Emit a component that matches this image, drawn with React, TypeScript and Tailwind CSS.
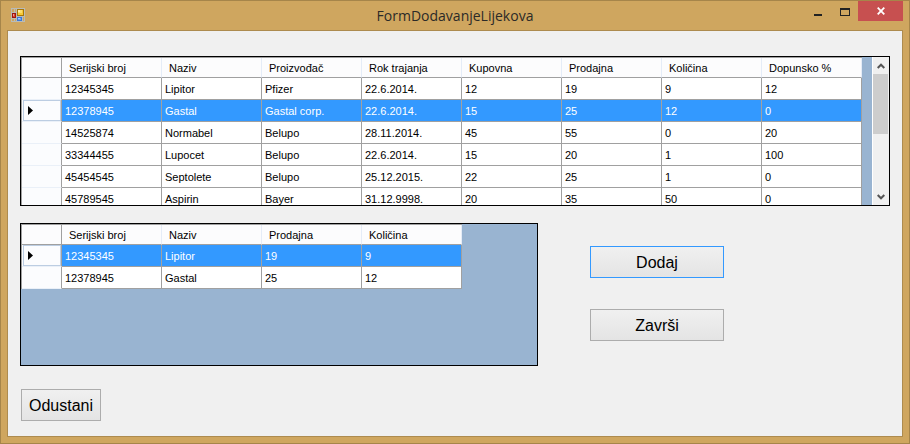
import type { ReactNode } from "react";

type GridProps = {
  label: string;
  columns: string[];
  rows: string[][];
  selected: number;
};

const stockColumns = [
  "Serijski broj",
  "Naziv",
  "Proizvođač",
  "Rok trajanja",
  "Kupovna",
  "Prodajna",
  "Količina",
  "Dopunsko %",
];

const stockRows = [
  ["12345345", "Lipitor", "Pfizer", "22.6.2014.", "12", "19", "9", "12"],
  ["12378945", "Gastal", "Gastal corp.", "22.6.2014.", "15", "25", "12", "0"],
  ["14525874", "Normabel", "Belupo", "28.11.2014.", "45", "55", "0", "20"],
  ["33344455", "Lupocet", "Belupo", "22.6.2014.", "15", "20", "1", "100"],
  ["45454545", "Septolete", "Belupo", "25.12.2015.", "22", "25", "1", "0"],
  ["45789545", "Aspirin", "Bayer", "31.12.9998.", "20", "35", "50", "0"],
];

const orderColumns = ["Serijski broj", "Naziv", "Prodajna", "Količina"];

const orderRows = [
  ["12345345", "Lipitor", "19", "9"],
  ["12378945", "Gastal", "25", "12"],
];

function FormIcon() {
  return (
    <svg width="14" height="14" viewBox="0 0 14 14" shapeRendering="crispEdges" aria-hidden="true">
      <path d="M0 0H14V14H0Z" fill="#b9bbb8" />
      <path d="M1 1H3V4H1ZM4 1H5V4H4ZM1 11H3V13H1ZM4 11H5V13H4ZM12 9H13V13H12Z" fill="#cfa65f" />
      <path d="M1 5H5V10H1Z" fill="#9c1712" />
      <path d="M2 6H4V9H2Z" fill="#dc4433" />
      <path d="M2 6H3V8H2Z" fill="#f0998c" />
      <path d="M6 1H13V8H6Z" fill="#a87608" />
      <path d="M7 2H12V7H7Z" fill="#f6c935" />
      <path d="M7 2H11V5H7Z" fill="#fbdc6c" />
      <path d="M7 2H9V4H7Z" fill="#fdeda6" />
      <path d="M6 9H11V13H6Z" fill="#3c78d8" />
      <path d="M7 10H10V12H7Z" fill="#6ea2ee" />
      <path d="M7 10H9V11H7Z" fill="#a9ccfb" />
    </svg>
  );
}

function TitleBar() {
  return (
    <header className="flex h-[29px] items-start">
      <div className="flex-1">
        <div className="pl-1 pt-[7px]">
          <FormIcon />
        </div>
      </div>
      <h1 className="pt-1 font-['Open_Sans','Noto_Sans',sans-serif] text-[14px] leading-[22px] text-[#2b2a28]">
        FormDodavanjeLijekova
      </h1>
      <div className="flex flex-1 justify-end">
        <button type="button" aria-label="Minimize" className="flex h-5 w-[27px] items-center justify-center">
          <svg width="8" height="10" viewBox="0 0 8 10" shapeRendering="crispEdges">
            <path d="M0 8H8V10H0Z" fill="#222" />
          </svg>
        </button>
        <button type="button" aria-label="Maximize" className="flex h-[22px] w-[27px] items-center justify-center">
          <svg width="10" height="8" viewBox="0 0 10 8" shapeRendering="crispEdges">
            <path d="M0 0H10V8H0ZM1 2V7H9V2Z" fill="#222" fillRule="evenodd" />
          </svg>
        </button>
        <button type="button" aria-label="Close" className="flex h-5 w-[45px] items-center justify-center bg-[#c75050]">
          <svg width="8" height="8" viewBox="0 0 8 8">
            <path d="M0.7 0.7L7.3 7.3M7.3 0.7L0.7 7.3" stroke="#fff" strokeWidth="1.8" />
          </svg>
        </button>
      </div>
    </header>
  );
}

function DataGrid({ label, columns, rows, selected }: GridProps) {
  return (
    <table
      aria-label={label}
      className="table-fixed border-separate border-spacing-0 border-l border-t border-[#a0a0a0] text-left font-['Liberation_Sans',Arial,sans-serif] text-[11px] leading-[18px] text-black"
    >
      <thead>
        <tr className="h-5 bg-[#fcfcfd]">
          <th className="w-10 border-b border-r border-[#a0a0a0] p-0" aria-label="Row" />
          {columns.map((column) => (
            <th key={column} scope="col" className="w-[100px] border-b border-b-[#a0a0a0] border-r border-r-[#e5ecf7] p-0 pl-[7px] pt-px font-normal">
              {column}
            </th>
          ))}
        </tr>
      </thead>
      <tbody>
        {rows.map((row, index) => {
          const active = index === selected;
          return (
            <tr key={row[0]} className={active ? "h-[22px] bg-[#3399ff] text-white" : "h-[22px] bg-white"}>
              <td className="border-b border-r border-b-[#eaf0f8] border-r-[#a0a0a0] bg-[#fbfcfe] p-0">
                {active && (
                  <div className="ml-px flex h-[21px] items-center border border-[#bccde2] pl-1">
                    <svg width="5" height="9" viewBox="0 0 5 9" role="img" aria-label="Current row">
                      <path d="M0 0L5 4.5L0 9Z" fill="#000" />
                    </svg>
                  </div>
                )}
              </td>
              {row.map((value, cell) => (
                <td key={columns[cell]} className="border-b border-r border-[#a0a0a0] p-0 pl-[3px] pt-px">
                  {value}
                </td>
              ))}
            </tr>
          );
        })}
      </tbody>
    </table>
  );
}

function ScrollBar() {
  return (
    <div className="flex w-[17px] shrink-0 flex-col border-l border-white bg-[#f0f0f0]">
      <button type="button" aria-label="Scroll up" className="flex h-[17px] items-center justify-center">
        <svg width="8" height="6" viewBox="0 0 8 6">
          <path d="M0.7 5L4 1.7L7.3 5" fill="none" stroke="#555" strokeWidth="2" />
        </svg>
      </button>
      <div className="flex-1 pr-px">
        <div className="h-[60px] bg-[#cdcdcd]" />
      </div>
      <button type="button" aria-label="Scroll down" className="flex h-[17px] items-center justify-center">
        <svg width="8" height="6" viewBox="0 0 8 6">
          <path d="M0.7 1L4 4.3L7.3 1" fill="none" stroke="#555" strokeWidth="2" />
        </svg>
      </button>
    </div>
  );
}

function FormButton({ children, focused = false, className }: { children: ReactNode; focused?: boolean; className: string }) {
  return (
    <button
      type="button"
      className={`h-8 border bg-linear-to-b from-[#f0f0f0] to-[#e4e4e4] pt-px font-['Liberation_Sans',Arial,sans-serif] text-base leading-5 text-black ${
        focused ? "border-[#3399ff]" : "border-[#acacac]"
      } ${className}`}
    >
      {children}
    </button>
  );
}

export default function App() {
  return (
    <div className="flex min-h-screen flex-col border border-[#a6854a] bg-[#cfa65f] px-1.5 pb-1.5">
      <TitleBar />
      <main className="flex-1 border border-[#ad8b4f] bg-[#f0f0f0] px-3 pb-[15px] pt-[25px]">
        <section className="flex h-[150px] border border-black bg-[#99b4d1]">
          <div className="min-w-0 flex-1 overflow-hidden">
            <DataGrid label="Lijekovi" columns={stockColumns} rows={stockRows} selected={1} />
          </div>
          <ScrollBar />
        </section>
        <div className="mt-[17px] flex gap-[52px]">
          <section className="h-[143px] w-[518px] overflow-hidden border border-black bg-[#99b4d1]">
            <DataGrid label="Odabrani lijekovi" columns={orderColumns} rows={orderRows} selected={0} />
          </section>
          <div className="flex flex-col gap-[31px] pt-[23px]">
            <FormButton focused className="w-[134px]">
              Dodaj
            </FormButton>
            <FormButton className="w-[134px]">Završi</FormButton>
          </div>
        </div>
        <FormButton className="ml-px mt-[23px] w-20">Odustani</FormButton>
      </main>
    </div>
  );
}
